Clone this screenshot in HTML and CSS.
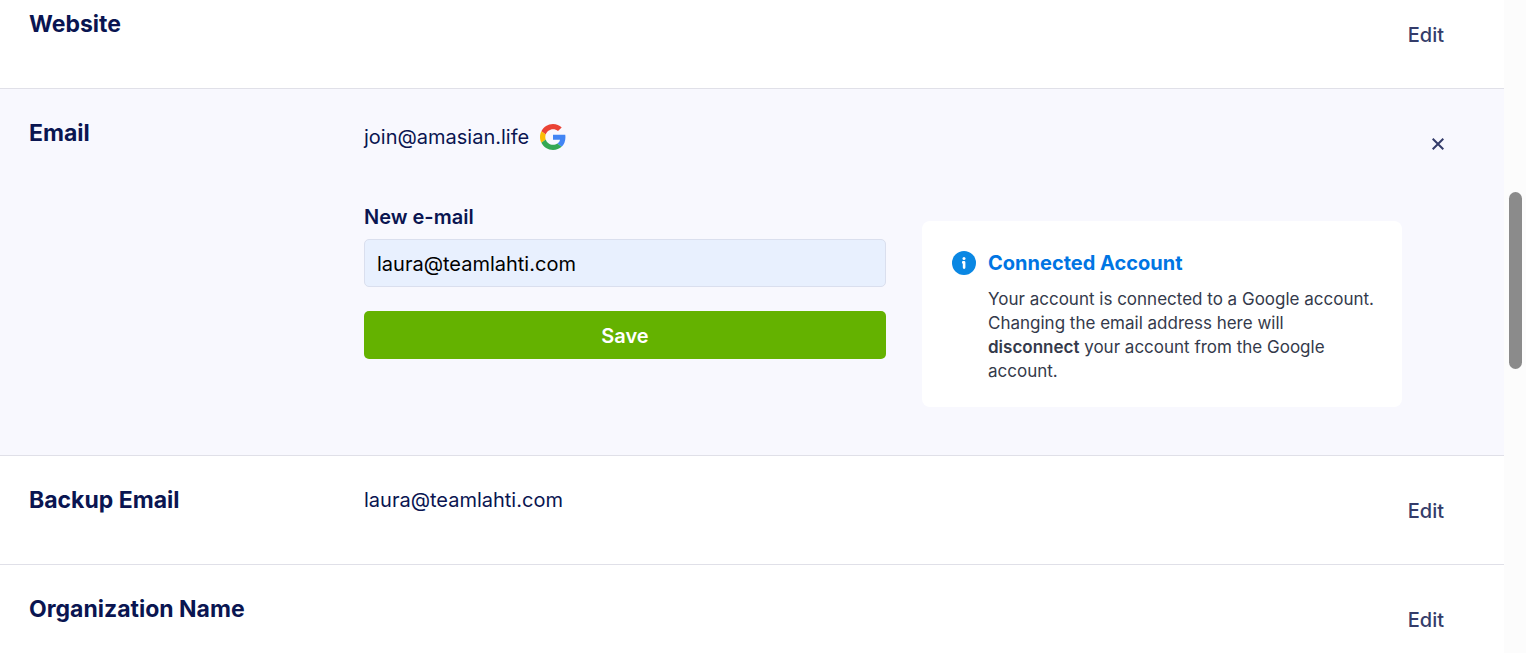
FILE: index.html
```html
<!DOCTYPE html>
<html lang="en">
<head>
  <meta charset="UTF-8">
  <meta name="viewport" content="width=device-width, initial-scale=1.0">
  <title>Account Settings</title>
  <link rel="stylesheet" href="styles.css">
</head>
<body>
  <div class="page">
    <main class="settings">
      <section class="row row-first">
        <h2 class="row-title">Website</h2>
        <div class="row-content"></div>
        <button class="edit-btn" type="button">Edit</button>
      </section>

      <section class="row row-open">
        <h2 class="row-title">Email</h2>
        <div class="row-content">
          <div class="current-email">
            <span>join@amasian.life</span>
            <svg class="google-icon" viewBox="0 0 48 48" aria-hidden="true">
              <path fill="#EA4335" d="M24 9.5c3.54 0 6.71 1.22 9.21 3.6l6.85-6.85C35.9 2.38 30.47 0 24 0 14.62 0 6.51 5.38 2.56 13.22l7.98 6.19C12.43 13.72 17.74 9.5 24 9.5z"/>
              <path fill="#4285F4" d="M46.98 24.55c0-1.57-.15-3.09-.38-4.55H24v9.02h12.94c-.58 2.96-2.26 5.48-4.78 7.18l7.73 6c4.51-4.18 7.09-10.36 7.09-17.65z"/>
              <path fill="#FBBC05" d="M10.53 28.59c-.48-1.45-.76-2.99-.76-4.59s.27-3.14.76-4.59l-7.98-6.19C.92 16.46 0 20.12 0 24c0 3.88.92 7.54 2.56 10.78l7.97-6.19z"/>
              <path fill="#34A853" d="M24 48c6.48 0 11.93-2.13 15.89-5.81l-7.73-6c-2.15 1.45-4.92 2.3-8.16 2.3-6.26 0-11.57-4.22-13.47-9.91l-7.98 6.19C6.51 42.62 14.62 48 24 48z"/>
            </svg>
          </div>
          <div class="email-edit">
            <form class="email-form">
              <label for="newEmail">New e-mail</label>
              <input type="email" id="newEmail" value="laura@teamlahti.com">
              <button class="save-btn" type="button">Save</button>
            </form>
            <div class="notice">
              <svg class="info-icon" viewBox="0 0 24 24" aria-hidden="true">
                <circle cx="12" cy="12" r="12" fill="#0a87e3"/>
                <circle cx="12" cy="7.4" r="1.5" fill="#fff"/>
                <path d="M11.2 11.4h.9v5.2" fill="none" stroke="#fff" stroke-width="2.6" stroke-linecap="round" stroke-linejoin="round"/>
              </svg>
              <div>
                <h3 class="notice-title">Connected Account</h3>
                <p class="notice-text">Your account is connected to a Google account. Changing the email address here will <strong>disconnect</strong> your account from the Google account.</p>
              </div>
            </div>
          </div>
        </div>
        <button class="close-btn" type="button" aria-label="Close">
          <svg viewBox="0 0 12 12" aria-hidden="true">
            <path d="M.7.7l10.6 10.6M11.3.7L.7 11.3" stroke="#343c6a" stroke-width="2" fill="none"/>
          </svg>
        </button>
      </section>

      <section class="row">
        <h2 class="row-title">Backup Email</h2>
        <div class="row-content">laura@teamlahti.com</div>
        <button class="edit-btn" type="button">Edit</button>
      </section>

      <section class="row">
        <h2 class="row-title">Organization Name</h2>
        <div class="row-content"></div>
        <button class="edit-btn" type="button">Edit</button>
      </section>
    </main>

    <div class="scroll-track">
      <div class="scroll-thumb"></div>
    </div>
  </div>
</body>
</html>
```

FILE: styles.css
```css
* {
  box-sizing: border-box;
}

body {
  margin: 0;
  font-family: Inter, "Liberation Sans", sans-serif;
  font-size: 20px;
  line-height: 32px;
  color: #0a1551;
  background-color: #ffffff;
}

.page {
  display: flex;
  height: 100vh;
  overflow: hidden;
}

.settings {
  flex: 1;
  min-width: 0;
}

/* Setting rows */
.row {
  display: grid;
  grid-template-columns: 335px 1fr 42px;
  align-items: start;
  padding: 28px 60px 26px 29px;
  border-bottom: 1px solid #e0e0e8;
}

.row-first {
  padding-top: 8px;
}

.row-open {
  padding-bottom: 48px;
  background-color: #f8f8fe;
}

.row-title {
  margin: 0;
  font-size: 23px;
  font-weight: 650;
}

button {
  font-family: inherit;
  font-size: 20px;
  border: none;
  padding: 0;
  cursor: pointer;
}

.edit-btn,
.close-btn {
  display: flex;
  justify-content: flex-end;
  align-items: center;
  height: 54px;
  background: none;
  color: #343c6a;
}

.edit-btn {
  font-weight: 500;
}

.close-btn svg {
  width: 12px;
  height: 12px;
}

/* Email section */
.current-email {
  display: flex;
  align-items: center;
  gap: 11px;
  height: 40px;
  margin-bottom: 48px;
}

.google-icon {
  width: 26px;
  height: 26px;
}

.email-edit {
  display: flex;
  align-items: flex-start;
  gap: 36px;
}

.email-form {
  display: flex;
  flex-direction: column;
  flex: 1;
  min-width: 0;
}

.email-form label {
  font-weight: 600;
  line-height: 24px;
  margin-bottom: 10px;
}

.email-form input {
  width: 100%;
  height: 48px;
  padding: 2px 12px 0;
  border: 1px solid #dadfee;
  border-radius: 5px;
  background-color: #e8f0fe;
  color: #000000;
  font-family: inherit;
  font-size: 20px;
}

.save-btn {
  height: 48px;
  margin-top: 24px;
  padding-top: 2px;
  border-radius: 5px;
  background-color: #64b200;
  color: #ffffff;
  font-weight: 600;
}

.notice {
  display: flex;
  gap: 12px;
  width: 480px;
  margin-top: 16px;
  padding: 30px 24px 24px 30px;
  border-radius: 8px;
  background-color: #ffffff;
}

.info-icon {
  flex: none;
  width: 24px;
  height: 24px;
}

.notice-title {
  margin: 0 0 12px;
  font-size: 20px;
  line-height: 24px;
  font-weight: 700;
  color: #0075e3;
}

.notice-text {
  margin: 0;
  font-size: 17px;
  line-height: 24px;
  color: #343a4b;
}

.notice-text strong {
  font-weight: 600;
}

/* Scrollbar */
.scroll-track {
  width: 22px;
  padding: 192px 4px 0 5px;
  background-color: #fcfcfc;
}

.scroll-thumb {
  height: 177px;
  border-radius: 7px;
  background-color: #8b8b8b;
}
```
